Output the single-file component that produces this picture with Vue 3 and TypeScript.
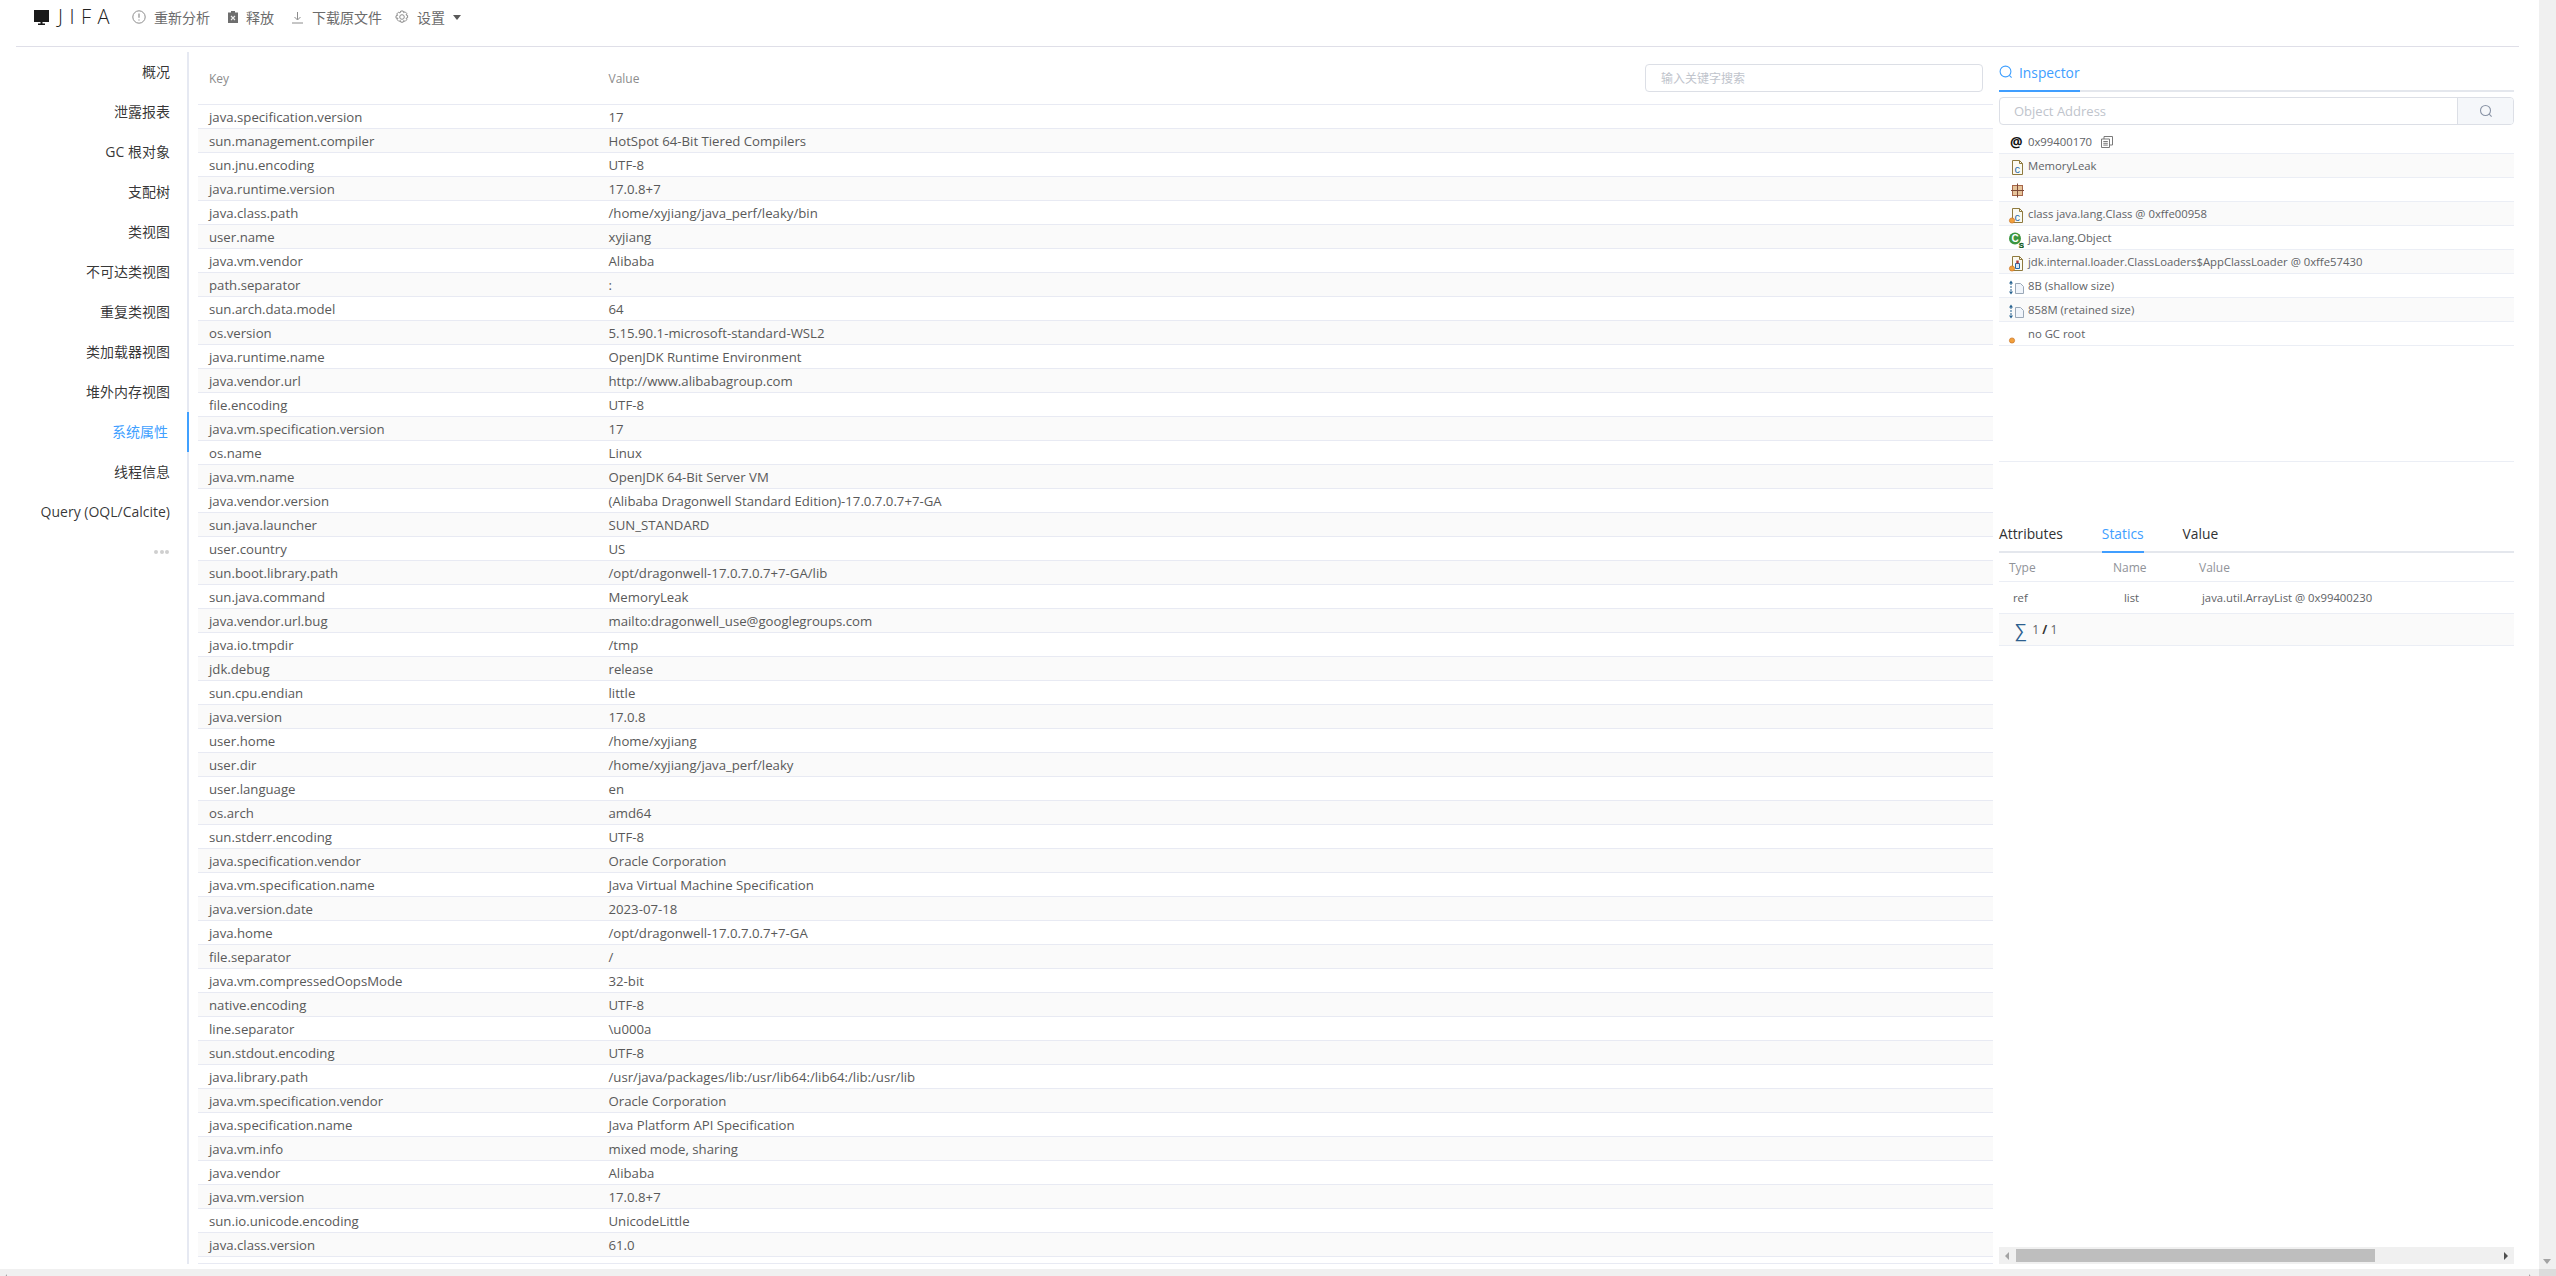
<script setup lang="ts">
const menu: string[] = ['概况', '泄露报表', 'GC 根对象', '支配树', '类视图', '不可达类视图', '重复类视图', '类加载器视图', '堆外内存视图', '系统属性', '线程信息', 'Query (OQL/Calcite)']
const props: [string, string][] = [
  ['java.specification.version', '17'],
  ['sun.management.compiler', 'HotSpot 64-Bit Tiered Compilers'],
  ['sun.jnu.encoding', 'UTF-8'],
  ['java.runtime.version', '17.0.8+7'],
  ['java.class.path', '/home/xyjiang/java_perf/leaky/bin'],
  ['user.name', 'xyjiang'],
  ['java.vm.vendor', 'Alibaba'],
  ['path.separator', ':'],
  ['sun.arch.data.model', '64'],
  ['os.version', '5.15.90.1-microsoft-standard-WSL2'],
  ['java.runtime.name', 'OpenJDK Runtime Environment'],
  ['java.vendor.url', 'http://www.alibabagroup.com'],
  ['file.encoding', 'UTF-8'],
  ['java.vm.specification.version', '17'],
  ['os.name', 'Linux'],
  ['java.vm.name', 'OpenJDK 64-Bit Server VM'],
  ['java.vendor.version', '(Alibaba Dragonwell Standard Edition)-17.0.7.0.7+7-GA'],
  ['sun.java.launcher', 'SUN_STANDARD'],
  ['user.country', 'US'],
  ['sun.boot.library.path', '/opt/dragonwell-17.0.7.0.7+7-GA/lib'],
  ['sun.java.command', 'MemoryLeak'],
  ['java.vendor.url.bug', 'mailto:dragonwell_use@googlegroups.com'],
  ['java.io.tmpdir', '/tmp'],
  ['jdk.debug', 'release'],
  ['sun.cpu.endian', 'little'],
  ['java.version', '17.0.8'],
  ['user.home', '/home/xyjiang'],
  ['user.dir', '/home/xyjiang/java_perf/leaky'],
  ['user.language', 'en'],
  ['os.arch', 'amd64'],
  ['sun.stderr.encoding', 'UTF-8'],
  ['java.specification.vendor', 'Oracle Corporation'],
  ['java.vm.specification.name', 'Java Virtual Machine Specification'],
  ['java.version.date', '2023-07-18'],
  ['java.home', '/opt/dragonwell-17.0.7.0.7+7-GA'],
  ['file.separator', '/'],
  ['java.vm.compressedOopsMode', '32-bit'],
  ['native.encoding', 'UTF-8'],
  ['line.separator', '\\u000a'],
  ['sun.stdout.encoding', 'UTF-8'],
  ['java.library.path', '/usr/java/packages/lib:/usr/lib64:/lib64:/lib:/usr/lib'],
  ['java.vm.specification.vendor', 'Oracle Corporation'],
  ['java.specification.name', 'Java Platform API Specification'],
  ['java.vm.info', 'mixed mode, sharing'],
  ['java.vendor', 'Alibaba'],
  ['java.vm.version', '17.0.8+7'],
  ['sun.io.unicode.encoding', 'UnicodeLittle'],
  ['java.class.version', '61.0'],
]
</script>

<template>
  <div class="page">
    <div class="upper">
      <div class="content">
        <header class="topbar">
          <svg class="logo-icon" width="15" height="15" viewBox="0 0 15 15"><path d="M0 0h15v12H0z" fill="#1a1a1a"/><path d="M6.5 12h2v1.5h2.5V15H4v-1.5h2.5z" fill="#1a1a1a"/></svg>
          <span class="brand">JIFA</span>
          <span class="tool first">
            <svg width="14" height="14" viewBox="0 0 14 14" fill="none" stroke="#8c8c8c"><circle cx="7" cy="7" r="6.2"/><path d="M7 3.4v4.4M7 9.4v1.2" stroke-width="1.2"/></svg>
            重新分析
          </span>
          <span class="tool">
            <svg width="10" height="12" viewBox="0 0 10 12"><path d="M0 1.5h3V0h4v1.5h3V12H0z" fill="#6e6e6e"/><path d="M3 5l4 4M7 5L3 9" stroke="#eee" stroke-width="1.1"/></svg>
            释放
          </span>
          <span class="tool t-dl">
            <svg width="13" height="13" viewBox="0 0 13 13" fill="none" stroke="#8c8c8c"><path d="M6.5 1v7.5M3.5 6l3 3 3-3M1 12h11"/></svg>
            下载原文件
          </span>
          <span class="tool t-set">
            <svg width="14" height="14" viewBox="0 0 14 14" fill="none" stroke="#8c8c8c"><circle cx="7" cy="7" r="2.3"/><path d="M5.8 1h2.4l.4 1.6 1.5-.8 1.7 1.7-.8 1.5 1.6.4v2.4l-1.6.4.8 1.5-1.7 1.7-1.5-.8-.4 1.6H5.8l-.4-1.6-1.5.8-1.7-1.7.8-1.5L1 8.2V5.8l1.6-.4-.8-1.5 1.7-1.7 1.5.8z"/></svg>
            设置
            <i class="caret"></i>
          </span>
        </header>

        <div class="body">
          <nav class="sidebar">
            <a v-for="m in menu" :key="m" class="menu-item" :class="{ active: m === '系统属性' }">{{ m }}</a>
            <div class="menu-more"><i></i><i></i><i></i></div>
          </nav>

          <section class="table">
            <div class="thead">
              <span class="c-key">Key</span>
              <span class="c-val">Value</span>
              <div class="search">输入关键字搜索</div>
            </div>
            <div v-for="p in props" :key="p[0]" class="tr">
              <span class="c-key">{{ p[0] }}</span>
              <span class="c-val">{{ p[1] }}</span>
            </div>
            <div class="tfoot"></div>
          </section>

          <aside class="side">
            <div class="tabs">
              <span class="tab on">
                <svg width="14" height="14" viewBox="0 0 14 14" fill="none" stroke="#40a0ff" stroke-width="1.1"><circle cx="6.5" cy="6.5" r="5.4"/><path d="M10.4 10.4l2.2 2.2"/></svg>
                Inspector
              </span>
            </div>
            <div class="addr">
              <div class="addr-input">Object Address</div>
              <div class="addr-btn">
                <svg width="14" height="14" viewBox="0 0 14 14" fill="none" stroke="#8a94a6" stroke-width="1.1"><circle cx="6.5" cy="6.5" r="5"/><path d="M10.2 10.2l2.4 2.4"/></svg>
              </div>
            </div>
            <div class="info">
              <div class="irow">
                <span class="at">@</span><span class="itext">0x99400170</span>
                <svg class="copy" width="12" height="12" viewBox="0 0 12 12" fill="none" stroke="#7a7a7a"><path d="M.5 3h8v8.5h-8zM3 3V.5h8.5V9H8.5M2.3 5.5h4.5M2.3 7.3h4.5M2.3 9.1h4.5"/></svg>
              </div>
              <div class="irow">
                <svg class="ic" width="16" height="20" viewBox="0 0 16 20"><path d="M4.5 4.5h7l3 3v11h-10z" fill="#fbfaf2" stroke="#8f7a3e"/><path d="M11.5 4.5v3h3" fill="none" stroke="#8f7a3e"/><text x="6.6" y="16.5" font-size="11" font-family="Liberation Sans" fill="#2466a8">c</text></svg>
                <span class="itext">MemoryLeak</span>
              </div>
              <div class="irow">
                <svg class="ic" width="16" height="20" viewBox="0 0 16 20"><rect x="4.5" y="5.5" width="10" height="10" fill="#e6c49a" stroke="#a5664a"/><path d="M9.5 3.5v14M3 10.5h13" stroke="#7c4a38"/></svg>
              </div>
              <div class="irow">
                <svg class="ic" width="16" height="20" viewBox="0 0 16 20"><path d="M4.5 4.5h7l3 3v11h-10z" fill="#fbfaf2" stroke="#8f7a3e"/><path d="M11.5 4.5v3h3" fill="none" stroke="#8f7a3e"/><text x="6.6" y="16.5" font-size="11" font-family="Liberation Sans" fill="#2466a8">c</text><circle cx="4" cy="16.5" r="2.6" fill="#f2a03c" stroke="#c8742a" stroke-width=".7"/></svg>
                <span class="itext">class java.lang.Class @ 0xffe00958</span>
              </div>
              <div class="irow">
                <svg class="ic" width="16" height="20" viewBox="0 0 16 20"><circle cx="7" cy="10.5" r="6" fill="#3c9640"/><text x="3.6" y="14" font-size="10" font-weight="700" font-family="Liberation Sans" fill="#fff">C</text><text x="10.8" y="19.5" font-size="8" font-weight="700" font-family="Liberation Sans" fill="#0f5a1c" stroke="#0f5a1c" stroke-width=".3">S</text></svg>
                <span class="itext">java.lang.Object</span>
              </div>
              <div class="irow">
                <svg class="ic" width="16" height="20" viewBox="0 0 16 20"><path d="M4.5 4.5h7l3 3v11h-10z" fill="#fbfaf2" stroke="#8f7a3e"/><path d="M11.5 4.5v3h3" fill="none" stroke="#8f7a3e"/><path d="M7.5 11.5h4v5h-4z" fill="#dbe8f5" stroke="#2466a8"/><path d="M8.3 8.5h2.4v3H8.3z" fill="#b0383a"/><circle cx="4" cy="16.5" r="2.6" fill="#f2a03c" stroke="#c8742a" stroke-width=".7"/></svg>
                <span class="itext">jdk.internal.loader.ClassLoaders$AppClassLoader @ 0xffe57430</span>
              </div>
              <div class="irow" v-for="s in ['8B (shallow size)', '858M (retained size)']" :key="s">
                <svg class="ic" width="16" height="20" viewBox="0 0 16 20"><path d="M3 7v9" stroke="#25608f" stroke-dasharray="2 1"/><path d="M3 4.5L1 7.5h4zM3 18.5L1 15.5h4z" fill="#25608f"/><path d="M7.5 7.5h5l3 3v7h-8z" fill="#f1f5fb" stroke="#9aa8b8"/></svg>
                <span class="itext">{{ s }}</span>
              </div>
              <div class="irow">
                <svg class="ic" width="16" height="20" viewBox="0 0 16 20"><circle cx="4" cy="16.5" r="2.6" fill="#f2a03c" stroke="#c8742a" stroke-width=".7"/></svg>
                <span class="itext">no GC root</span>
              </div>
            </div>
            <div class="tabs lower">
              <span class="tab dark">Attributes</span>
              <span class="tab on">Statics</span>
              <span class="tab dark">Value</span>
            </div>
            <div class="st-head">
              <span class="st-a">Type</span><span class="st-b">Name</span><span class="st-c">Value</span>
            </div>
            <div class="st-row">
              <span class="st-a in">ref</span><span class="st-b in">list</span><span class="st-c in">java.util.ArrayList @ 0x99400230</span>
            </div>
            <div class="st-sum"><span class="sigma">∑</span><span>1 <b>/</b> 1</span></div>
            <div class="side-spacer"></div>
            <div class="inner-hbar">
              <i class="arr left"></i>
              <div class="thumb"></div>
              <i class="arr right"></i>
            </div>
          </aside>
        </div>
      </div>
      <div class="vbar"><i class="down"></i></div>
    </div>
    <div class="hbar">
      <i class="hl"></i>
      <i class="hr"></i>
      <div class="corner"></div>
    </div>
  </div>
</template>

<style>
html, body { margin: 0; background: #fff; overflow: hidden; }
</style>

<style scoped>
.page {
  width: 2556px;
  height: 1276px;
  display: flex;
  flex-direction: column;
  overflow: hidden;
  font-family: "Open Sans", "Noto Sans CJK SC", sans-serif;
  color: #595959;
  font-size: 13.2px;
}
.upper { flex: 1; display: flex; min-height: 0; }
.content { flex: 1; min-width: 0; display: flex; flex-direction: column; }
.vbar { width: 17px; background: #f0f0f0; position: relative; }
.vbar .down {
  position: absolute; left: 4px; bottom: 5px;
  border-left: 4px solid transparent; border-right: 4px solid transparent; border-top: 5px solid #a3a3a3;
}
.hbar { height: 7px; background: #f0f0f0; position: relative; }
.corner { position: absolute; right: 0; top: 0; width: 17px; height: 7px; background: #dcdcdc; }
.hl { position: absolute; left: 4px; top: 5px; border-top: 4px solid transparent; border-right: 3px solid #a3a3a3; border-bottom: 4px solid transparent; }
.hr { position: absolute; left: 2529px; top: 5px; border-top: 4px solid transparent; border-left: 3px solid #a3a3a3; border-bottom: 4px solid transparent; }

.topbar {
  height: 46px;
  margin: 0 20px 0 16px;
  border-bottom: 1px solid #dfdfe8;
  display: flex;
  align-items: flex-start;
  flex: none;
}
.logo-icon { margin: 10px 0 0 18px; }
.brand {
  margin-left: 9px;
  font-size: 20px;
  font-weight: 300;
  letter-spacing: 6.5px;
  color: #222;
  line-height: 34px;
  width: 66px;
}
.tool {
  display: inline-flex;
  align-items: center;
  gap: 8px;
  height: 34px;
  font-size: 14px;
  color: #6b6b6b;
  margin-left: 18px;
}
.tool.first { margin-left: 8px; }
.tool.t-dl { margin-left: 17px; }
.tool.t-set { margin-left: 13px; }
.caret { width: 0; height: 0; border-left: 4px solid transparent; border-right: 4px solid transparent; border-top: 5px solid #595959; }

.body { flex: 1; min-height: 0; display: flex; padding-top: 5px; padding-bottom: 5px; }
.sidebar { width: 187px; border-right: 2px solid #e6e9f2; flex: none; }
.menu-item {
  display: block;
  height: 40px;
  line-height: 40px;
  text-align: right;
  padding-right: 19px;
  margin-right: -2px;
  font-size: 14px;
  color: rgba(0, 0, 0, .8);
}
.menu-item.active { color: #40a0ff; border-right: 2px solid #40a0ff; padding-right: 19px; }
.menu-more { height: 40px; display: flex; justify-content: flex-end; align-items: center; gap: 1.5px; padding-right: 18px; }
.menu-more i { width: 4px; height: 4px; border-radius: 50%; background: #cfcfcf; }

.table { width: 1795px; margin-left: 9px; flex: none; display: flex; flex-direction: column; }
.thead {
  height: 53px;
  box-sizing: border-box;
  border-bottom: 1px solid #e8eaf3;
  position: relative;
  display: flex;
  align-items: center;
  font-size: 12px;
  color: #8c8c8c;
}
.c-key { width: 400px; padding-left: 11px; box-sizing: border-box; flex: none; }
.c-val { flex: 1; padding-left: 10.5px; }
.search {
  position: absolute;
  left: 1447px;
  top: 12px;
  width: 338px;
  height: 28px;
  box-sizing: border-box;
  border: 1px solid #dcdfe6;
  border-radius: 4px;
  padding-left: 15px;
  line-height: 27px;
  color: #c0c4cc;
  font-size: 12px;
}
.tr {
  height: 24px;
  box-sizing: border-box;
  border-bottom: 1px solid #e8eaf3;
  padding-top: 1px;
  display: flex;
  align-items: center;
  line-height: 22px;
}
.tr:nth-child(odd) { background: #fafafa; }
.tfoot { height: 7px; box-sizing: border-box; border-bottom: 1px solid #e8eaf3; }

.side { width: 515px; margin-left: 6px; flex: none; display: flex; flex-direction: column; font-size: 11.3px; }
.tabs { height: 40px; box-sizing: border-box; border-bottom: 2px solid #e4e7ed; display: flex; gap: 39px; flex: none; }
.tabs.lower { margin-top: 51px; }
.tab { display: inline-flex; align-items: center; gap: 6px; height: 40px; box-sizing: border-box; font-size: 13.8px; font-weight: 500; }
.tab.on { color: #409eff; border-bottom: 2px solid #409eff; padding-top: 2px; }
.tab.dark { color: #303133; }
.addr { height: 28px; margin-top: 5px; box-sizing: border-box; display: flex; border: 1px solid #dcdfe6; border-radius: 4px; flex: none; overflow: hidden; }
.addr-input { flex: 1; padding-left: 14px; line-height: 26px; color: #c0c4cc; font-size: 13px; }
.addr-btn { width: 55px; background: #f5f7fa; border-left: 1px solid #dcdfe6; display: flex; align-items: center; justify-content: center; }
.info { margin-top: 5px; height: 332px; box-sizing: border-box; border-bottom: 1px solid #ebeef5; flex: none; }
.irow {
  height: 24px;
  box-sizing: border-box;
  border-bottom: 1px solid #ebeef5;
  display: flex;
  align-items: center;
  padding-left: 9px;
  position: relative;
  color: #606266;
}
.irow:nth-child(even) { background: #fafafa; }
.ic { flex: none; margin-right: 4px; }
.itext { white-space: nowrap; }
.at { width: 14px; margin-left: 2px; margin-right: 4px; color: #111; font-weight: 700; font-size: 14px; flex: none; }
.copy { margin-left: 9px; }

.st-head { height: 29px; box-sizing: border-box; border-bottom: 1px solid #ebeef5; display: flex; align-items: center; color: #909399; font-size: 12px; flex: none; }
.st-row { height: 32px; box-sizing: border-box; border-bottom: 1px solid #ebeef5; display: flex; align-items: center; color: #606266; flex: none; }
.st-a { width: 104px; padding-left: 10px; box-sizing: border-box; flex: none; }
.st-a.in { padding-left: 14px; }
.st-b { width: 86px; padding-left: 10px; box-sizing: border-box; flex: none; }
.st-b.in { padding-left: 21px; }
.st-c { flex: 1; padding-left: 10px; }
.st-c.in { padding-left: 13px; }
.st-sum { height: 32px; box-sizing: border-box; border-bottom: 1px solid #ebeef5; background: #fafafa; display: flex; align-items: center; padding-left: 16px; gap: 6px; font-size: 12px; color: #606266; flex: none; }
.sigma { color: #2d5f8f; font-size: 18px; line-height: 20px; }
.st-sum b { color: #333; font-weight: 700; }
.side-spacer { flex: 1; }
.inner-hbar { height: 17px; background: #f0f0f0; position: relative; flex: none; }
.thumb { position: absolute; left: 17px; top: 2px; width: 359px; height: 13px; background: #bebebe; }
.arr { position: absolute; top: 5px; border-top: 4px solid transparent; border-bottom: 4px solid transparent; }
.arr.left { left: 6px; border-right: 4px solid #a3a3a3; }
.arr.right { right: 6px; border-left: 4px solid #505050; }
</style>
